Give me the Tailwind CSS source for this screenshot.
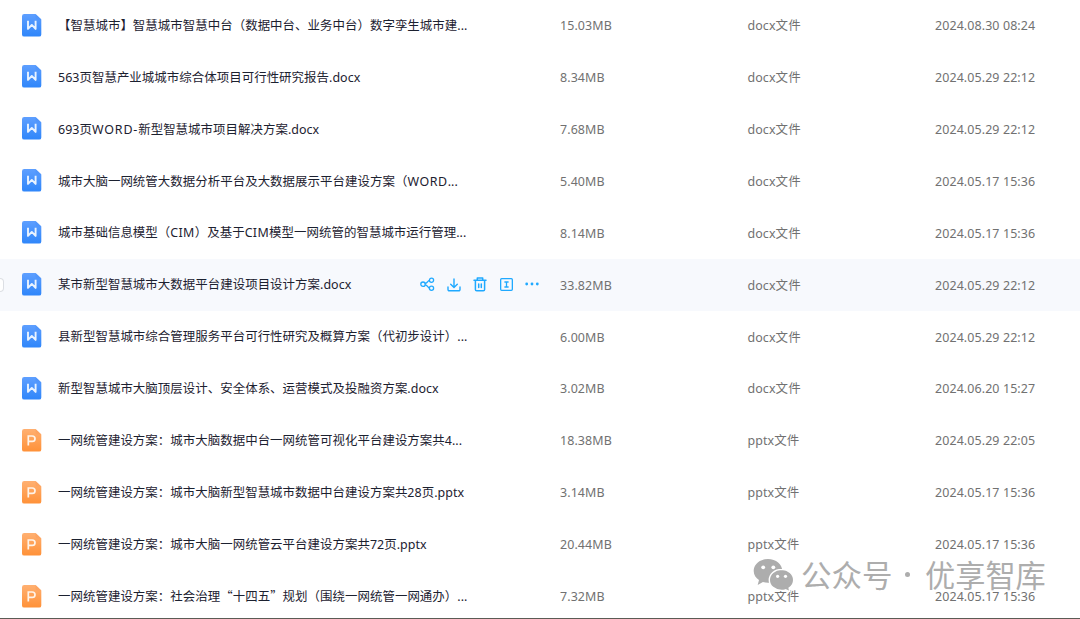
<!DOCTYPE html>
<html lang="zh-CN">
<head>
  <meta charset="UTF-8">
  <meta name="viewport" content="width=device-width, initial-scale=1.0">
  <title>文件列表</title>
  <script src="https://cdn.jsdelivr.net/npm/@tailwindcss/browser@4"></script>
</head>
<body class="relative h-[619px] overflow-hidden bg-white font-['Noto_Sans','Noto_Sans_CJK_SC',sans-serif] text-[12.45px] leading-[18px] text-[#717171]">

  <!-- Shared icon shapes -->
  <svg class="absolute size-0">
    <defs>
      <linearGradient id="blue" x1="0" y1="0" x2="0" y2="1">
        <stop offset="0" stop-color="#5e9fff" />
        <stop offset="1" stop-color="#2f86fa" />
      </linearGradient>
      <linearGradient id="orange" x1="0" y1="0" x2="0" y2="1">
        <stop offset="0" stop-color="#ffb071" />
        <stop offset="1" stop-color="#ff9138" />
      </linearGradient>
    </defs>
    <symbol id="docx" viewBox="0 0 20 23">
      <path d="M2.2 0H13.500l5.800 5.400v15a2.2 2.2 0 0 1-2.2 2.2H2.2A2.2 2.2 0 0 1 0 20.4V2.2A2.2 2.2 0 0 1 2.2 0z" fill="url(#blue)" />
      <path d="M13.500 0l5.800 5.400h-4a1.800 1.800 0 0 1-1.800-1.800z" fill="#5196fb" />
      <path d="M6 6.800v8.100l3.800-4 3.800 4V6.800" fill="none" stroke="#e9f3ff" stroke-width="1.900" stroke-linejoin="round" />
    </symbol>
    <symbol id="pptx" viewBox="0 0 20 23">
      <path d="M2.2 0H13.500l5.800 5.400v15a2.2 2.2 0 0 1-2.2 2.2H2.2A2.2 2.2 0 0 1 0 20.4V2.2A2.2 2.2 0 0 1 2.2 0z" fill="url(#orange)" />
      <path d="M13.500 0l5.800 5.400h-4a1.800 1.800 0 0 1-1.800-1.800z" fill="#fda462" />
      <path d="M6.300 16.400V7h4a2.700 2.700 0 0 1 0 5.400H6.300" fill="none" stroke="#fff3e8" stroke-width="1.700" />
    </symbol>
  </svg>

  <div id="fileList" class="-mt-[0.9px]"></div>

  <!-- Row hover actions -->
  <template id="actions">
    <div class="flex w-[120px] shrink-0 items-center gap-[12.2px] text-[#1fa9ff]">
      <svg class="size-[15px]" viewBox="0 0 15 15" fill="none" stroke="currentColor" stroke-width="1.3">
        <circle cx="3" cy="7.200" r="2.200" />
        <circle cx="11.500" cy="3.200" r="2.100" /><circle cx="11.500" cy="11.200" r="2.100" />
        <path d="M5.100 6.500c2.600-.2 2.600-3 4.400-3.200M5.100 7.900c2.600.2 2.600 3 4.400 3.200" />
      </svg>
      <svg class="size-[14px]" viewBox="0 0 14 14" fill="none" stroke="currentColor" stroke-width="1.400" stroke-linecap="round" stroke-linejoin="round">
        <path d="M7 1v8.300M3.700 6.200L7 9.400l3.300-3.200M1 9v2.600a1.200 1.200 0 0 0 1.200 1.200h9.600a1.200 1.200 0 0 0 1.200-1.200V9" />
      </svg>
      <svg class="h-[15px] w-[14px]" viewBox="0 0 14 15" fill="none" stroke="currentColor" stroke-width="1.500" stroke-linecap="round" stroke-linejoin="round">
        <path d="M1 3.300h12M4.300 3V1h5.400v2M2.400 3.500v9a1.300 1.300 0 0 0 1.300 1.300h6.600a1.300 1.300 0 0 0 1.300-1.300v-9M5.700 7v3.400M8.300 7v3.400" />
      </svg>
      <svg class="-mt-px size-[13px]" viewBox="0 0 13 13" fill="none" stroke="currentColor" stroke-width="1.300">
        <rect x=".65" y=".65" width="11.700" height="11.700" rx="1" />
        <path d="M4.400 4h4.200M4.400 9h4.200M6.500 4v5" />
      </svg>
      <svg class="-mt-px h-[4px] w-[14px]" viewBox="0 0 14 4" fill="currentColor">
        <circle cx="1.700" cy="2" r="1.400" /><circle cx="7" cy="2" r="1.400" /><circle cx="12.300" cy="2" r="1.400" />
      </svg>
    </div>
  </template>

  <!-- Watermark -->
  <div class="absolute left-[753px] top-[556px] flex items-center text-[#adadad]">
    <svg class="h-[36px] w-[42px]" viewBox="0 0 42 36">
      <path d="M15 3C7 3 .7 8.200.7 14.900c0 3.800 2.100 6.900 5.300 9.100l-1.300 5 5.200-2.900c1.600.5 3.300.7 5.100.7 8 0 14.300-5.200 14.300-11.900S23 3 15 3z" fill="currentColor" />
      <path d="M28.500 13.400c-6.800 0-12.200 4.600-12.200 10.500s5.400 10.500 12.200 10.500c1.400 0 2.800-.2 4.100-.6l4.400 2.200-.9-3.900c2.900-1.900 4.600-4.800 4.600-8.200 0-5.900-5.400-10.500-12.200-10.500z" fill="currentColor" stroke="#fff" stroke-width="1.400" />
      <g fill="#fff">
        <circle cx="10.200" cy="11.300" r="1.900" /><circle cx="20.300" cy="11.300" r="1.900" />
        <circle cx="24.600" cy="20.300" r="1.600" /><circle cx="32.500" cy="20.300" r="1.600" />
      </g>
    </svg>
    <span class="ml-[6px] w-[92px] whitespace-nowrap font-['Noto_Sans_CJK_SC',sans-serif] text-[30.500px] leading-[36px]">公众号</span>
    <span class="ml-[12px] size-[5px] rounded-full bg-[#adadad]"></span>
    <span class="ml-[15px] whitespace-nowrap font-['Noto_Sans_CJK_SC',sans-serif] text-[30.200px] leading-[36px]">优享智库</span>
  </div>

  <div class="absolute bottom-0 left-0 h-px w-full bg-[#5b5b55]"></div>

  <script>
    const files = [
      { name: '【智慧城市】智慧城市智慧中台（数据中台、业务中台）数字孪生城市建...', size: '15.03MB', type: 'docx', date: '2024.08.30 08:24' },
      { name: '563页智慧产业城城市综合体项目可行性研究报告.docx', size: '8.34MB', type: 'docx', date: '2024.05.29 22:12' },
      { name: '693页<span class="tracking-[0.85px]">WORD-</span>新型智慧城市项目解决方案.docx', size: '7.68MB', type: 'docx', date: '2024.05.29 22:12' },
      { name: '城市大脑一网统管大数据分析平台及大数据展示平台建设方案（<span class="tracking-[0.6px]">WORD</span>...', size: '5.40MB', type: 'docx', date: '2024.05.17 15:36' },
      { name: '城市基础信息模型（<span class="tracking-[0.35px]">CIM</span>）及基于<span class="tracking-[0.35px]">CIM</span>模型一网统管的智慧城市运行管理...', size: '8.14MB', type: 'docx', date: '2024.05.17 15:36' },
      { name: '某市新型智慧城市大数据平台建设项目设计方案.docx', size: '33.82MB', type: 'docx', date: '2024.05.29 22:12', active: true },
      { name: '县新型智慧城市综合管理服务平台可行性研究及概算方案（代初步设计）...', size: '6.00MB', type: 'docx', date: '2024.05.29 22:12' },
      { name: '新型智慧城市大脑顶层设计、安全体系、运营模式及投融资方案.docx', size: '3.02MB', type: 'docx', date: '2024.06.20 15:27' },
      { name: '一网统管建设方案：城市大脑数据中台一网统管可视化平台建设方案共4...', size: '18.38MB', type: 'pptx', date: '2024.05.29 22:05' },
      { name: '一网统管建设方案：城市大脑新型智慧城市数据中台建设方案共28页.pptx', size: '3.14MB', type: 'pptx', date: '2024.05.17 15:36' },
      { name: '一网统管建设方案：城市大脑一网统管云平台建设方案共72页.pptx', size: '20.44MB', type: 'pptx', date: '2024.05.17 15:36' },
      { name: '一网统管建设方案：社会治理<span class="font-[\'Noto_Sans_CJK_SC\',sans-serif]">“十四五”</span>规划（围绕一网统管一网通办）...', size: '7.32MB', type: 'pptx', date: '2024.05.17 15:36' }
    ];

    const list = document.getElementById('fileList');
    const actions = document.getElementById('actions').innerHTML;

    files.forEach(f => {
      const row = document.createElement('div');
      row.className = 'flex h-[51.92px] items-center' + (f.active ? ' bg-[#f7f9fd]' : '');
      row.innerHTML =
        `<div class="w-[22px] shrink-0">${f.active ? '<div class="h-[14px] w-[4px] rounded-r-[4px] border border-l-0 border-[#dcdfe4] bg-white"></div>' : ''}</div>` +
        `<svg class="h-[23px] w-[20px] shrink-0"><use href="#${f.type}" /></svg>` +
        `<div class="ml-[16px] flex w-[502px] shrink-0 items-center justify-between">` +
          `<span class="whitespace-nowrap pt-[1.5px] tracking-[0.04px] text-[#1c2130]">${f.name}</span>${f.active ? '<div class="mr-[20px]">' + actions + '</div>' : ''}</div>` +
        `<div class="w-[187.500px] shrink-0 pt-[2px] tracking-[0.1px]">${f.size}</div>` +
        `<div class="w-[187.500px] shrink-0 pt-[2px] tracking-[0.1px]">${f.type}文件</div>` +
        `<div class="whitespace-nowrap pt-[2px] tracking-[0.1px]">${f.date}</div>`;
      list.appendChild(row);
    });
  </script>
</body>
</html>
